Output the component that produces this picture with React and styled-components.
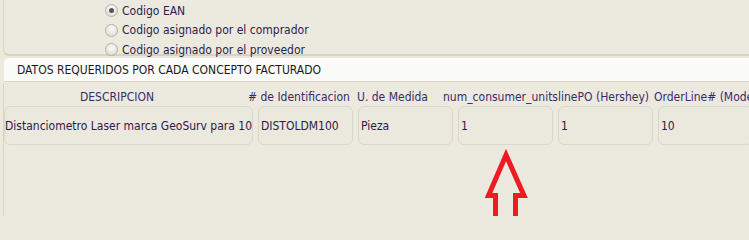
import React from 'react';
import styled, { createGlobalStyle } from 'styled-components';

const GlobalStyle = createGlobalStyle`
  html, body {
    margin: 0;
    padding: 0;
    background: #ece9df;
  }
  body {
    font-family: "DejaVu Sans Condensed", "DejaVu Sans", sans-serif;
    font-stretch: condensed;
    font-size: 12px;
    overflow: hidden;
  }
`;

const Page = styled.div`
  position: relative;
  width: 749px;
  height: 216px;
  overflow: hidden;
`;

const OptionsPanel = styled.div`
  margin-left: 3px;
  height: 53px;
  padding: 1px 0 0 101px;
  border-left: 1px solid #d8d5c6;
  border-bottom: 2px solid #d6d3c2;
  border-bottom-left-radius: 6px;
  display: flex;
  flex-direction: column;
`;

const Option = styled.label`
  display: flex;
  flex-shrink: 0;
  align-items: center;
  gap: 4px;
  height: 19.5px;
  color: #2b1d4d;
  white-space: nowrap;
`;

const Radio = styled.span`
  position: relative;
  width: 11px;
  height: 11px;
  border-radius: 50%;
  border: 1px solid #b4b2aa;
  background: radial-gradient(circle at 50% 35%, #fdfdfd 0%, #e6e5e0 60%, #d2d0c8 100%);
  flex-shrink: 0;

  &::after {
    content: '';
    display: ${(p) => (p.$checked ? 'block' : 'none')};
    position: absolute;
    left: 3px;
    top: 3px;
    width: 5px;
    height: 5px;
    border-radius: 50%;
    background: #555;
  }
`;

const SectionTitle = styled.div`
  margin: 2px 0 0 4px;
  height: 23px;
  line-height: 24px;
  padding-left: 13px;
  background: #fbfbfa;
  border-top-left-radius: 5px;
  border-bottom: 1px solid #d9d6c9;
  color: #1a1a1a;
  white-space: nowrap;
`;

const TableArea = styled.div`
  margin-left: 3px;
  border-left: 1px solid #d8d5c6;
  height: 140px;
`;

const HeadRow = styled.div`
  display: grid;
  grid-template-columns: 244px 109px 86px 115px 96px 1fr;
  height: 22px;
  line-height: 26px;
  margin-top: 2px;
  color: #3a2a6c;
  white-space: nowrap;
`;

const HeadCell = styled.div`
  text-align: ${(p) => (p.$center ? 'center' : 'left')};
  padding-right: ${(p) => (p.$center ? '18px' : '0')};
  overflow: visible;
`;

const DataRow = styled.div`
  display: grid;
  grid-template-columns: 249px repeat(5, 95px);
  column-gap: 5px;
`;

const Field = styled.input`
  box-sizing: border-box;
  width: 100%;
  height: 39px;
  margin: 0;
  padding: 0 0 0 ${(p) => (p.$flush ? '0' : '2px')};
  border: 1px solid #dcd8c9;
  border-radius: 6px;
  background: #ebe8de;
  color: #2e1a42;
  font: inherit;
  outline: none;
`;

const Arrow = styled.svg`
  position: absolute;
  left: 0;
  top: 0;
  pointer-events: none;
`;

const headers = [
  '# de Identificacion',
  'U. de Medida',
  'num_consumer_units',
  'linePO (Hershey)',
  'OrderLine# (Modelo)',
];

const values = ['DISTOLDM100', 'Pieza', '1', '1', '10'];

export default function App() {
  return (
    <Page>
      <GlobalStyle />
      <OptionsPanel>
        <Option>
          <Radio $checked />
          Codigo EAN
        </Option>
        <Option>
          <Radio />
          Codigo asignado por el comprador
        </Option>
        <Option>
          <Radio />
          Codigo asignado por el proveedor
        </Option>
      </OptionsPanel>

      <SectionTitle>DATOS REQUERIDOS POR CADA CONCEPTO FACTURADO</SectionTitle>

      <TableArea>
        <HeadRow>
          <HeadCell $center>DESCRIPCION</HeadCell>
          {headers.map((h) => (
            <HeadCell key={h}>{h}</HeadCell>
          ))}
        </HeadRow>
        <DataRow>
          <Field $flush readOnly value="Distanciometro Laser marca GeoSurv para 100 metros" />
          {values.map((v, i) => (
            <Field key={i} readOnly value={v} />
          ))}
        </DataRow>
      </TableArea>

      <Arrow width="749" height="216" viewBox="0 0 749 216">
        <path
          d="M506 155 L488.5 195.5 L495.5 195.5 L495.5 222 L515.5 222 L515.5 195.5 L524 195.5 Z"
          fill="none"
          stroke="#ed1c24"
          strokeWidth="5"
          strokeLinejoin="miter"
        />
      </Arrow>
    </Page>
  );
}
